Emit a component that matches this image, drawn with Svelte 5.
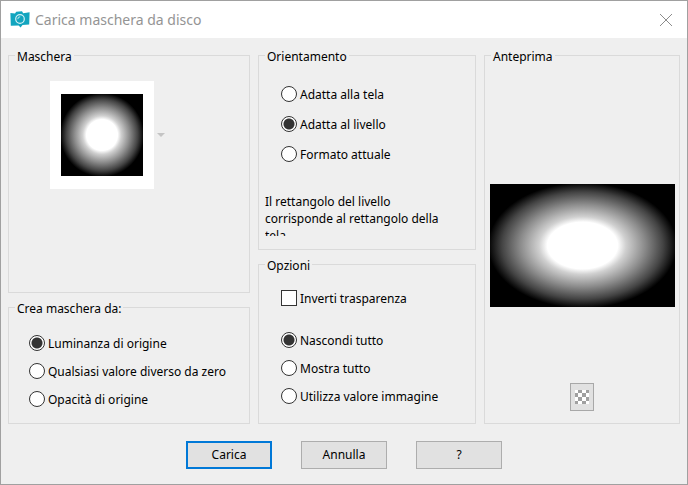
<script lang="ts">
  interface Choice {
    value: string;
    label: string;
  }

  const sources: Choice[] = [
    { value: 'luminance', label: 'Luminanza di origine' },
    { value: 'nonzero', label: 'Qualsiasi valore diverso da zero' },
    { value: 'opacity', label: 'Opacità di origine' },
  ];

  const orientations: Choice[] = [
    { value: 'canvas', label: 'Adatta alla tela' },
    { value: 'layer', label: 'Adatta al livello' },
    { value: 'current', label: 'Formato attuale' },
  ];

  const modes: Choice[] = [
    { value: 'hide', label: 'Nascondi tutto' },
    { value: 'show', label: 'Mostra tutto' },
    { value: 'image', label: 'Utilizza valore immagine' },
  ];

  let source = $state('luminance');
  let orientation = $state('layer');
  let mode = $state('hide');
  let invert = $state(false);
</script>

{#snippet cameraIcon()}
  <svg class="app-icon" viewBox="0 0 20 17" width="20" height="17">
    <path d="M0.4 2 L5 2.6 L6.2 0.8 L12 0.3 L13.2 2.2 L19.6 1.2 L19.2 13.6 L12.5 14 L10.6 16.4 L8.6 14.4 L0.8 14.8 Z" fill="#12a5bf"/>
    <circle cx="10" cy="8" r="4.3" fill="#12a5bf" stroke="#d4f0f5" stroke-width="1.2"/>
    <path d="M7.8 8.2 A2.3 2.3 0 0 1 10.2 5.8" fill="none" stroke="#d4f0f5" stroke-width="0.9"/>
  </svg>
{/snippet}

<div class="dialog" role="dialog" aria-labelledby="dialog-title">
  <header class="titlebar">
    {@render cameraIcon()}
    <h1 id="dialog-title">Carica maschera da disco</h1>
    <button class="close" aria-label="Chiudi">
      <svg viewBox="0 0 12 12" width="12" height="12" stroke="#8c8c8c" stroke-width="1" fill="none">
        <path d="M0 0 L12 12 M12 0 L0 12"/>
      </svg>
    </button>
  </header>

  <main class="panels">
    <div class="column">
      <fieldset class="grow">
        <legend>Maschera</legend>
        <button class="mask-picker" aria-label="Maschera">
          <span class="thumb"><span class="mask"></span></span>
          <svg viewBox="0 0 8 4" width="8" height="4"><path d="M0 0 H8 L4 4 Z" fill="#c4c4c4"/></svg>
        </button>
      </fieldset>

      <fieldset>
        <legend>Crea maschera da:</legend>
        <div class="choices source">
          {#each sources as item (item.value)}
            <label>
              <input type="radio" name="source" value={item.value} bind:group={source} />
              <span>{item.label}</span>
            </label>
          {/each}
        </div>
      </fieldset>
    </div>

    <div class="column">
      <fieldset>
        <legend>Orientamento</legend>
        <div class="choices orientation">
          {#each orientations as item (item.value)}
            <label>
              <input type="radio" name="orientation" value={item.value} bind:group={orientation} />
              <span>{item.label}</span>
            </label>
          {/each}
        </div>
        <p class="hint">Il rettangolo del livello corrisponde al rettangolo della tela.</p>
      </fieldset>

      <fieldset class="grow">
        <legend>Opzioni</legend>
        <div class="choices invert">
          <label>
            <input type="checkbox" bind:checked={invert} />
            <span>Inverti trasparenza</span>
          </label>
        </div>
        <div class="choices mode">
          {#each modes as item (item.value)}
            <label>
              <input type="radio" name="mode" value={item.value} bind:group={mode} />
              <span>{item.label}</span>
            </label>
          {/each}
        </div>
      </fieldset>
    </div>

    <div class="column">
      <fieldset class="grow preview">
        <legend>Anteprima</legend>
        <div class="mask large"></div>
        <button class="checker" aria-label="Sfondo trasparente">
          <svg viewBox="0 0 14 14" width="14" height="14" shape-rendering="crispEdges">
            <rect width="14" height="14" fill="#fff"/>
            <path d="M3 0h4v3h-4z M11 0h3v3h-3z M0 3h3v4h-3z M7 3h4v4h-4z M3 7h4v4h-4z M11 7h3v4h-3z M0 11h3v3h-3z M7 11h4v3h-4z" fill="#a0a0a0"/>
          </svg>
        </button>
      </fieldset>
    </div>
  </main>

  <footer class="actions">
    <button class="action primary">Carica</button>
    <button class="action">Annulla</button>
    <button class="action">?</button>
  </footer>
</div>

<style>
  :global(body) {
    background: #efefef;
  }

  .dialog {
    box-sizing: border-box;
    min-height: 100vh;
    border: 1px solid #a0a0a0;
    background: #efefef;
    color: #000;
    font-family: 'Noto Sans', 'Open Sans', sans-serif;
    font-size: 12px;
    line-height: 18px;
  }

  .titlebar {
    display: flex;
    align-items: center;
    gap: 5px;
    height: 37px;
    padding: 0 7px 0 9px;
    background: #fff;
  }

  .titlebar h1 {
    flex: 1;
    margin: 0;
    color: #949494;
    font-size: 14px;
    font-weight: 400;
  }

  button {
    border: 0;
    padding: 0;
    background: none;
    color: inherit;
    font: inherit;
  }

  .close {
    display: flex;
    align-items: center;
    justify-content: center;
    width: 28px;
    height: 28px;
  }

  .panels {
    display: grid;
    grid-template-columns: 242fr 218fr 196fr;
    gap: 8px;
    padding: 9px 7px 0;
  }

  .column {
    display: flex;
    flex-direction: column;
    gap: 6px;
    min-width: 0;
  }

  fieldset {
    min-width: 0;
    margin: 0;
    padding: 0;
    border: 1px solid #dadada;
  }

  legend {
    margin-left: 6px;
    padding: 4px 2px 0;
    line-height: 12px;
  }

  .grow {
    flex: 1;
  }

  .mask-picker {
    display: flex;
    align-items: center;
    gap: 3px;
    margin: 18px 0 0 41px;
  }

  .thumb {
    padding: 13px 11px;
    background: #fff;
  }

  .mask {
    display: block;
    width: 82px;
    height: 82px;
    background: radial-gradient(closest-side, #fff 38%, #d0d0d0 47%, #8c8c8c 67%, #444 87%, #000 102%);
  }

  .mask.large {
    width: auto;
    height: 123px;
    margin: 121px 4px 0 5px;
  }

  .choices {
    display: flex;
    flex-direction: column;
    gap: 10px;
  }

  label {
    display: flex;
    align-items: center;
    gap: 3px;
    height: 18px;
  }

  label span {
    padding-top: 2px;
    white-space: nowrap;
  }

  input {
    flex-shrink: 0;
    width: 16px;
    height: 16px;
    margin: 0;
    border: 1px solid #333;
    background: #fff;
    appearance: none;
  }

  input[type='radio'] {
    border-radius: 50%;
  }

  input[type='radio']:checked {
    background: radial-gradient(circle, #333 5px, #fff 6px);
  }

  input[type='checkbox']:checked {
    background: #333;
    box-shadow: inset 0 0 0 3px #fff;
  }

  .source {
    padding: 19px 0 15px 20px;
  }

  .orientation {
    gap: 12px;
    padding: 22px 0 0 22px;
  }

  /* two and a half lines tall, the rest is cut off */
  .hint {
    height: 43px;
    margin: 30px 20px 13px 6px;
    line-height: 17px;
    overflow: hidden;
  }

  .invert {
    padding: 17px 0 0 22px;
  }

  .mode {
    padding: 24px 0 18px 22px;
  }

  .preview {
    text-align: center;
  }

  .preview legend {
    text-align: left;
  }

  .checker {
    display: inline-flex;
    align-items: center;
    justify-content: center;
    box-sizing: border-box;
    width: 24px;
    height: 28px;
    margin-top: 76px;
    border: 1px solid #a8a8a8;
    background: #e1e1e1;
  }

  .actions {
    display: flex;
    justify-content: center;
    gap: 29px;
    padding: 17px 0 15px;
  }

  .action {
    box-sizing: border-box;
    width: 86px;
    height: 28px;
    border: 1px solid #adadad;
    background: #e1e1e1;
  }

  .action.primary {
    border: 2px solid #0078d7;
  }
</style>
